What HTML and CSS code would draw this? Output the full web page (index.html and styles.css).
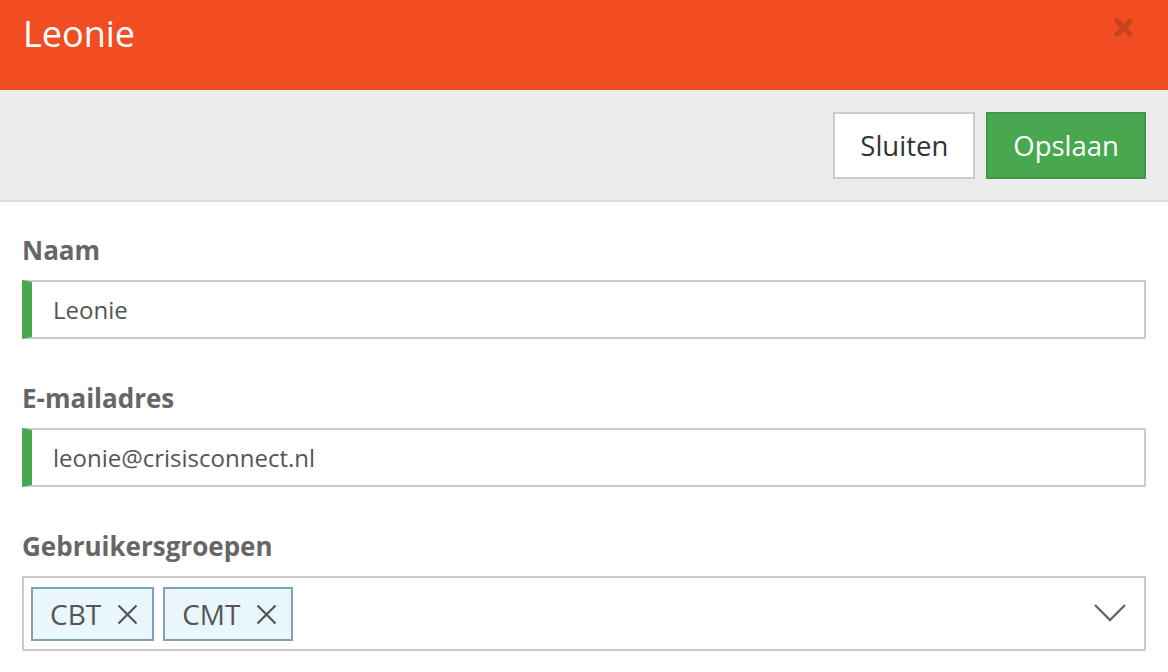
FILE: index.html
```html
<!DOCTYPE html>
<html>
<head>
<meta charset="utf-8">
<link rel="stylesheet" href="styles.css">
</head>
<body>

<div class="modal">
  <div class="modal-header">
    <h1>Leonie</h1>
    <svg class="close" width="21" height="21" viewBox="0 0 21 21">
      <path d="M2.5 2.5 L18.5 18.5 M18.5 2.5 L2.5 18.5" stroke="#c4441e" stroke-width="4.8"/>
    </svg>
  </div>

  <div class="toolbar">
    <button class="btn">Sluiten</button>
    <button class="btn btn-save">Opslaan</button>
  </div>

  <div class="modal-body">
    <div class="field">
      <label>Naam</label>
      <div class="input valid">Leonie</div>
    </div>

    <div class="field">
      <label>E-mailadres</label>
      <div class="input valid">leonie@crisisconnect.nl</div>
    </div>

    <div class="field">
      <label>Gebruikersgroepen</label>
      <div class="select">
        <span class="tag">CBT
          <svg class="tag-x" width="21" height="19" viewBox="0 0 21 19"><path d="M1.5 0.5 L19.5 18.5 M19.5 0.5 L1.5 18.5" stroke="#555" stroke-width="2.2"/></svg>
        </span>
        <span class="tag">CMT
          <svg class="tag-x" width="21" height="19" viewBox="0 0 21 19"><path d="M1.5 0.5 L19.5 18.5 M19.5 0.5 L1.5 18.5" stroke="#555" stroke-width="2.2"/></svg>
        </span>
        <svg class="chevron" width="34" height="20" viewBox="0 0 34 20">
          <path d="M2 2 L17 17 L32 2" fill="none" stroke="#666" stroke-width="2.4"/>
        </svg>
      </div>
    </div>
  </div>
</div>

</body>
</html>
```

FILE: styles.css
```css
* {
  box-sizing: border-box;
}

body {
  margin: 0;
  font-family: "Open Sans", "Liberation Sans", sans-serif;
  color: #555;
  background: #fff;
}

.modal-header {
  height: 90px;
  background-color: #f24d22;
  display: flex;
  align-items: flex-start;
  justify-content: space-between;
  padding: 0 34px 0 23px;
}

.modal-header h1 {
  margin: 0;
  padding-top: 9px;
  font-size: 36px;
  font-weight: normal;
  color: #fff;
}

.close {
  margin-top: 17px;
}

.toolbar {
  height: 112px;
  background-color: #ececec;
  border-bottom: 2px solid #dcdcdc;
  display: flex;
  justify-content: flex-end;
  align-items: flex-start;
  gap: 11px;
  padding: 22px 22px 0 0;
}

.btn {
  height: 67px;
  padding: 0 25px;
  font-family: "Open Sans", "Liberation Sans", sans-serif;
  font-size: 27.5px;
  color: #333;
  background: #fff;
  border: 2px solid #ccc;
}

.btn-save {
  color: #fff;
  background-color: #48a84f;
  border-color: #3f9846;
}

.modal-body {
  padding: 30px 22px 0 22px;
}

.field {
  margin-bottom: 41px;
}

.field label {
  display: block;
  font-size: 26px;
  line-height: 36px;
  font-weight: bold;
  color: #666;
  margin-bottom: 12px;
}

.input {
  height: 59px;
  border: 2px solid #ccc;
  padding: 0 0 0 21px;
  font-size: 24px;
  line-height: 56px;
  color: #555;
}

.input.valid {
  border-left: 10px solid #48a84f;
}

.select {
  height: 75px;
  margin-top: 1px;
  border: 2px solid #ccc;
  display: flex;
  align-items: center;
  gap: 9px;
  padding: 0 8px 0 7px;
}

.tag {
  height: 54px;
  display: flex;
  align-items: center;
  gap: 16px;
  padding: 0 14px 0 17px;
  border: 2px solid #7f9fbe;
  background-color: #e9f7fd;
  font-size: 28px;
  color: #555;
}

.tag-x {
  margin-top: 1px;
}

.chevron {
  margin-left: auto;
  margin-right: 9px;
  margin-top: -2px;
}
```
